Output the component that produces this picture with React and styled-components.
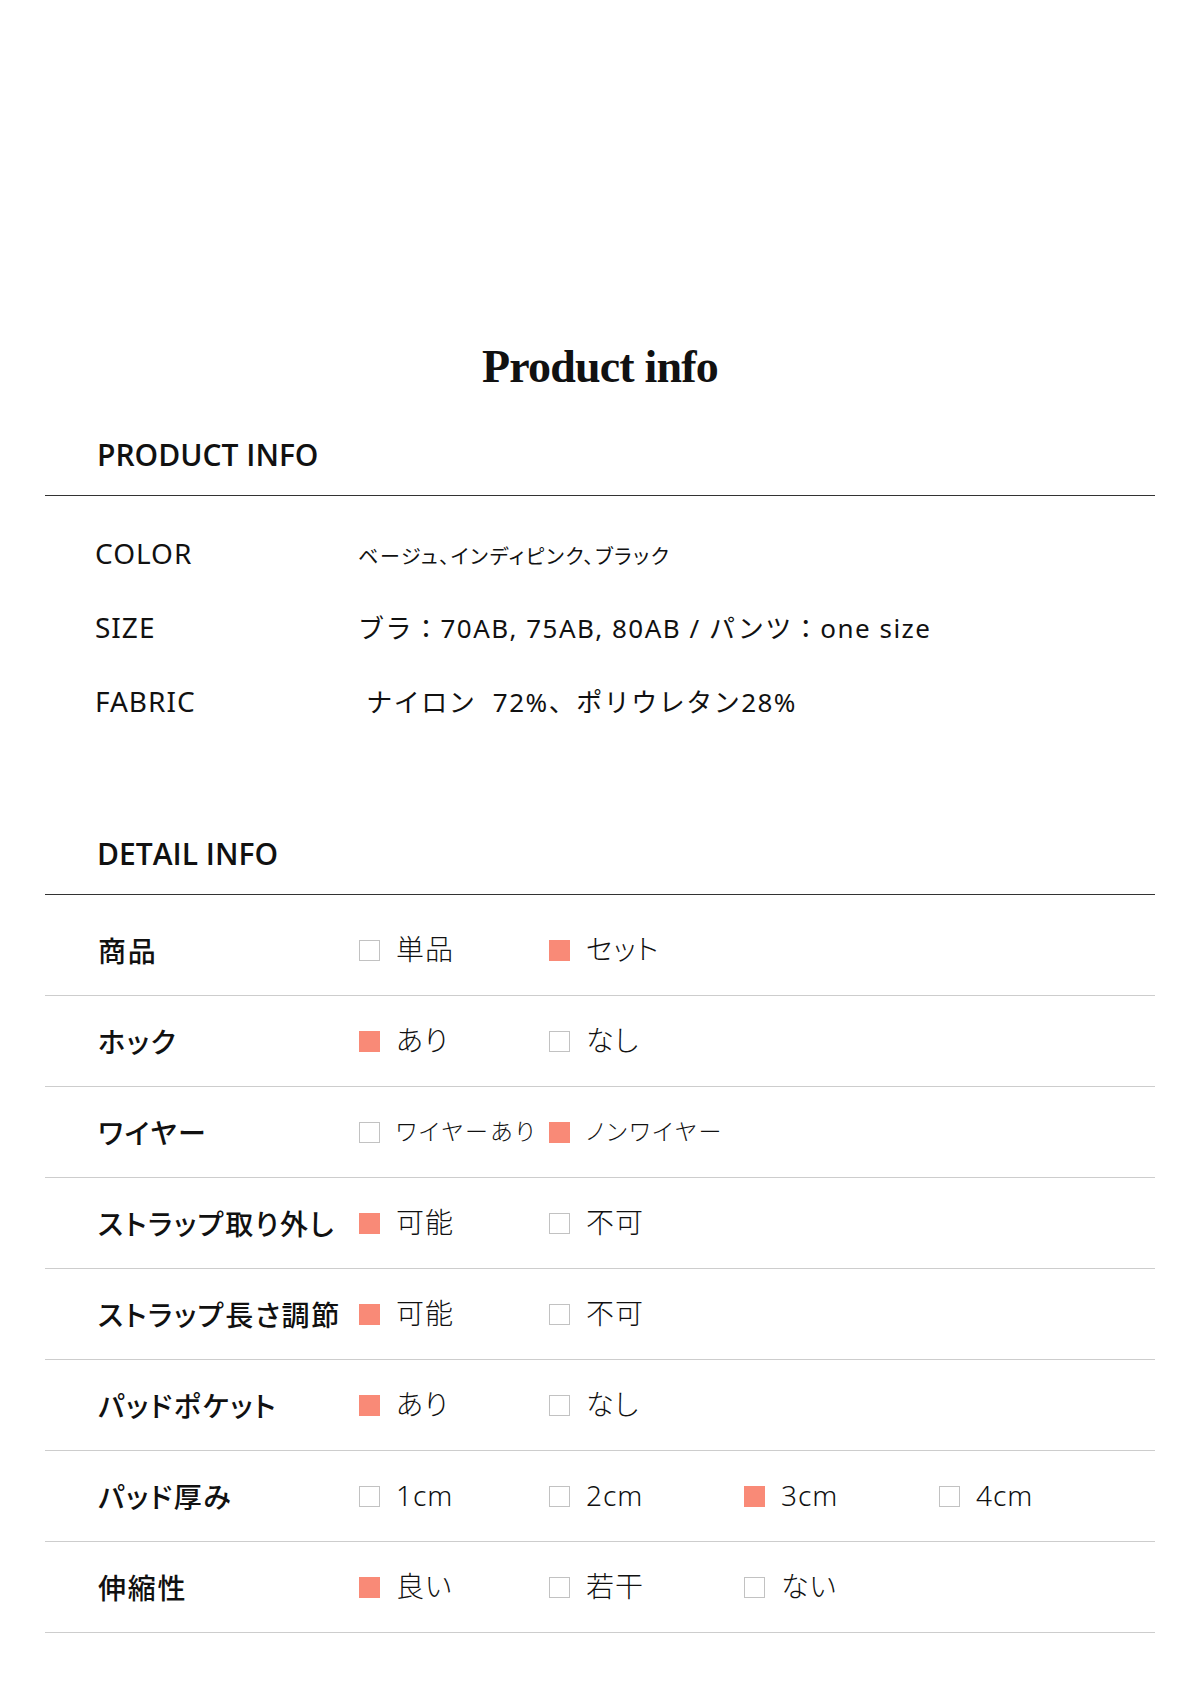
import React from 'react'
import styled, { createGlobalStyle } from 'styled-components'

const GlobalStyle = createGlobalStyle`
  html, body {
    margin: 0;
    padding: 0;
    background: #fff;
  }
  body {
    font-family: "Noto Sans", "Noto Sans CJK JP", sans-serif;
    color: #111;
  }
`

const productInfo = [
  { label: 'COLOR', value: 'ベージュ、インディピンク、ブラック', small: true },
  { label: 'SIZE', value: 'ブラ：70AB, 75AB, 80AB / パンツ：one size' },
  { label: 'FABRIC', value: '\u00a0ナイロン\u00a0 72%、ポリウレタン28%' },
]

const details = [
  { label: '商品', options: [['単品', false], ['セット', true]] },
  { label: 'ホック', options: [['あり', true], ['なし', false]] },
  { label: 'ワイヤー', small: true, options: [['ワイヤーあり', false], ['ノンワイヤー', true]] },
  { label: 'ストラップ取り外し', options: [['可能', true], ['不可', false]] },
  { label: 'ストラップ長さ調節', options: [['可能', true], ['不可', false]] },
  { label: 'パッドポケット', options: [['あり', true], ['なし', false]] },
  { label: 'パッド厚み', options: [['1cm', false], ['2cm', false], ['3cm', true], ['4cm', false]] },
  { label: '伸縮性', options: [['良い', true], ['若干', false], ['ない', false]] },
]

function App() {
  return (
    <Page>
      <GlobalStyle />
      <Title>Product info</Title>

      <SectionHead>PRODUCT INFO</SectionHead>
      <InfoList>
        {productInfo.map(item => (
          <InfoRow key={item.label}>
            <InfoLabel>{item.label}</InfoLabel>
            <InfoValue $small={item.small}>{item.value}</InfoValue>
          </InfoRow>
        ))}
      </InfoList>

      <SectionHead $gap>DETAIL INFO</SectionHead>
      <DetailList>
        {details.map(row => (
          <DetailRow key={row.label}>
            <DetailLabel>{row.label}</DetailLabel>
            {row.options.map(([text, on]) => (
              <Option key={text}>
                <Box $on={on} />
                <OptionText $small={row.small}>{text}</OptionText>
              </Option>
            ))}
          </DetailRow>
        ))}
      </DetailList>
    </Page>
  )
}

export default App

const Page = styled.div`
  width: 1110px;
  margin: 0 auto;
  padding: 342px 0 50px;
`

const Title = styled.h1`
  margin: 0;
  font-family: "Liberation Serif", serif;
  font-weight: 700;
  font-size: 46px;
  line-height: 50px;
  letter-spacing: -0.8px;
  text-align: center;
  color: #111;
`

const SectionHead = styled.h2`
  margin: ${p => (p.$gap ? '96px' : '43px')} 0 0;
  padding: 0 0 20px 52px;
  font-family: "Open Sans", "Noto Sans", sans-serif;
  font-weight: 600;
  font-size: 30px;
  line-height: 40px;
  color: #111;
  border-bottom: 1px solid #333;
`

const InfoList = styled.div`
  padding-top: 20px;
`

const InfoRow = styled.div`
  display: flex;
  align-items: baseline;
  height: 74px;
  line-height: 74px;
`

const InfoLabel = styled.div`
  width: 263px;
  padding-left: 50px;
  font-family: "Noto Sans", sans-serif;
  font-size: 28px;
  letter-spacing: 1px;
  color: #111;
`

const InfoValue = styled.div`
  font-family: "Noto Sans", "Noto Sans CJK JP", sans-serif;
  font-size: ${p => (p.$small ? '20px' : '26px')};
  letter-spacing: ${p => (p.$small ? '1.7px' : '1.5px')};
  font-feature-settings: ${p => (p.$small ? '"palt"' : 'normal')};
  color: #111;
  white-space: nowrap;
`

const DetailList = styled.div`
  padding-top: 10px;
`

const DetailRow = styled.div`
  display: grid;
  grid-template-columns: 314px 190px 195px 195px 1fr;
  align-items: center;
  height: 91px;
  box-sizing: border-box;
  border-bottom: 1px solid #cdcdcd;
`

const DetailLabel = styled.div`
  padding-left: 53px;
  font-family: "Noto Sans CJK JP", sans-serif;
  font-size: 28px;
  font-weight: 500;
  font-feature-settings: "palt";
  letter-spacing: 1.7px;
  white-space: nowrap;
  color: #111;
`

const Option = styled.div`
  display: flex;
  align-items: center;
  gap: 16px;
  white-space: nowrap;
`

const Box = styled.span`
  flex: none;
  width: 21px;
  height: 21px;
  box-sizing: border-box;
  border: 1px solid ${p => (p.$on ? '#f98a77' : '#c2c2c2')};
  background: ${p => (p.$on ? '#f98a77' : '#fff')};
`

const OptionText = styled.span`
  font-family: "Noto Sans", "Noto Sans CJK JP", sans-serif;
  font-size: ${p => (p.$small ? '23px' : '28px')};
  font-weight: 300;
  font-feature-settings: "palt";
  letter-spacing: ${p => (p.$small ? '2.5px' : '1px')};
  line-height: 1.2;
  color: #111;
`
